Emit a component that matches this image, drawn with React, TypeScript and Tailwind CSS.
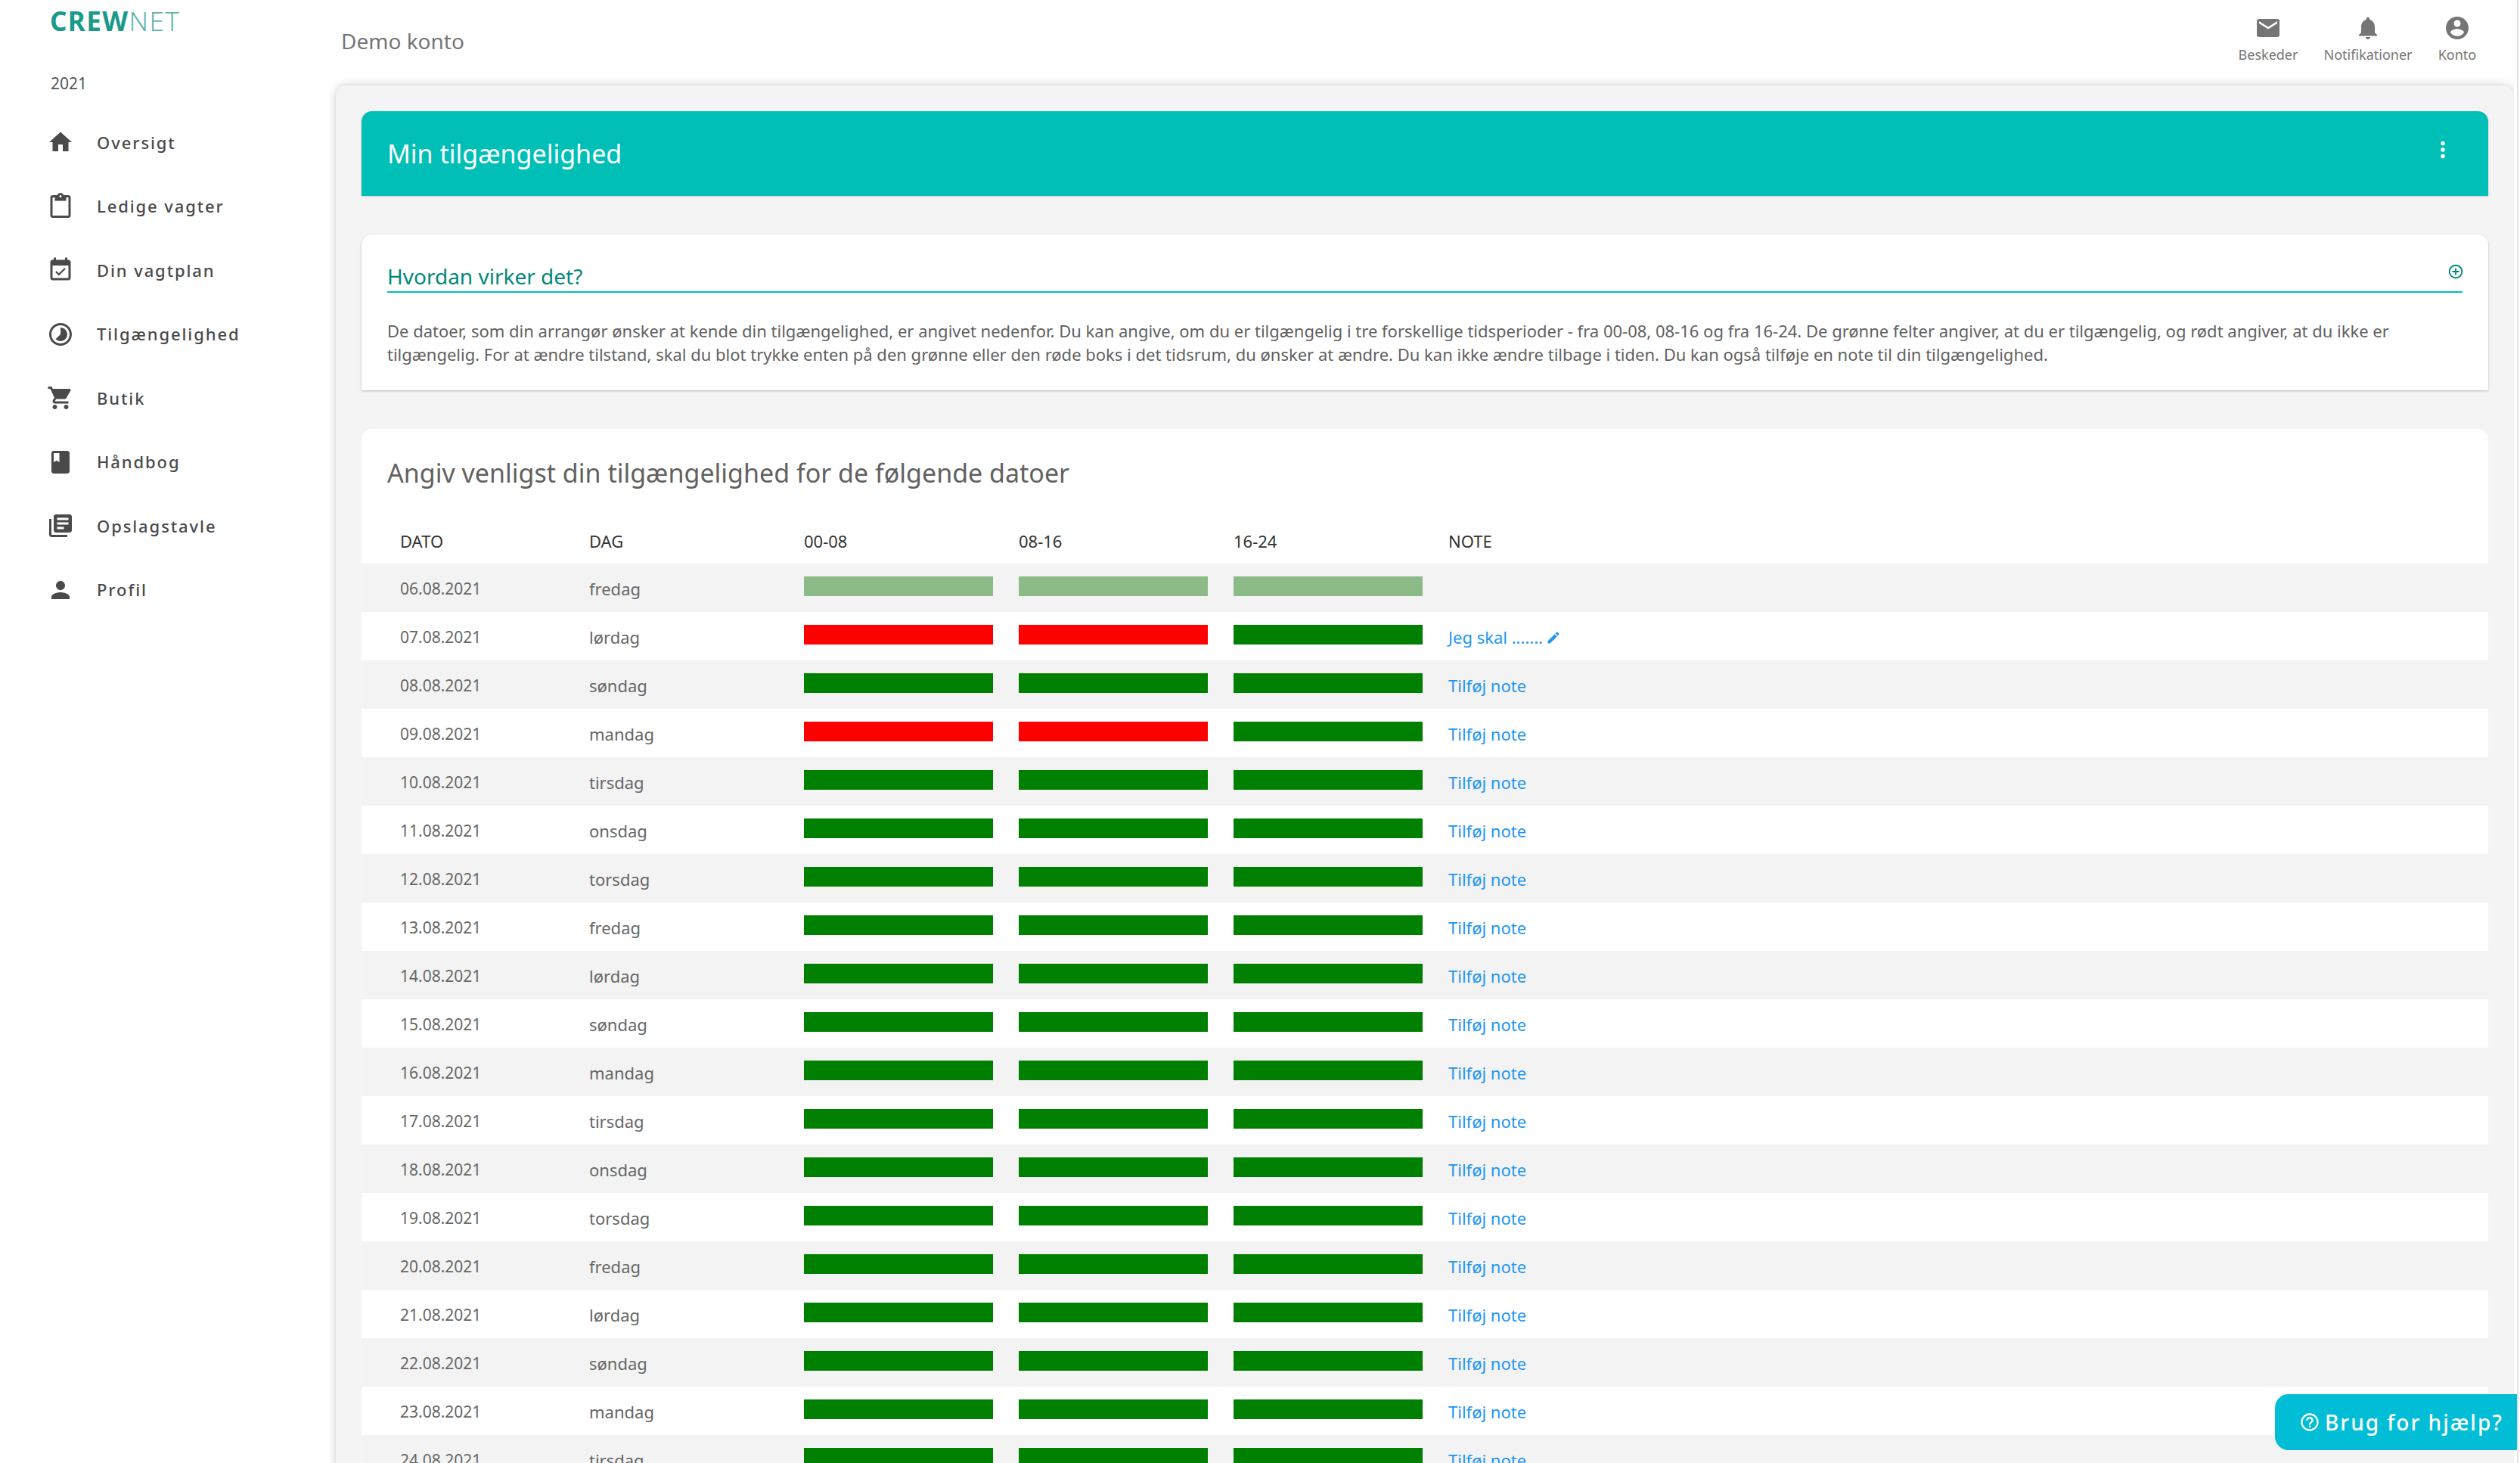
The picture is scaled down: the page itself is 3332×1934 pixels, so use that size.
import React from "react";

const icons: Record<string, string> = {
  home: "M10 20v-6h4v6h5v-8h3L12 3 2 12h3v8z",
  paste: "M19 2h-4.18C14.4.84 13.3 0 12 0c-1.3 0-2.4.84-2.82 2H5c-1.1 0-2 .9-2 2v16c0 1.1.9 2 2 2h14c1.1 0 2-.9 2-2V4c0-1.1-.9-2-2-2zm-7 0c.55 0 1 .45 1 1s-.45 1-1 1-1-.45-1-1 .45-1 1-1zm7 18H5V4h2v3h10V4h2v16z",
  event: "M16.53 11.06L15.47 10l-4.88 4.88-2.12-2.12-1.06 1.06L10.59 17l5.94-5.94zM19 3h-1V1h-2v2H8V1H6v2H5c-1.11 0-1.99.9-1.99 2L3 19c0 1.1.89 2 2 2h14c1.1 0 2-.9 2-2V5c0-1.1-.9-2-2-2zm0 16H5V8h14v11z",
  timelapse: "M16.24 7.76C15.07 6.59 13.54 6 12 6v6l-4.24 4.24c2.34 2.34 6.14 2.34 8.49 0 2.34-2.34 2.34-6.14-.01-8.48zM12 2C6.48 2 2 6.48 2 12s4.48 10 10 10 10-4.48 10-10S17.52 2 12 2zm0 18c-4.42 0-8-3.58-8-8s3.58-8 8-8 8 3.58 8 8-3.58 8-8 8z",
  cart: "M7 18c-1.1 0-1.99.9-1.99 2S5.9 22 7 22s2-.9 2-2-.9-2-2-2zM1 2v2h2l3.6 7.59-1.35 2.45c-.16.28-.25.61-.25.96 0 1.1.9 2 2 2h12v-2H7.42c-.14 0-.25-.11-.25-.25l.03-.12.9-1.63h7.45c.75 0 1.41-.41 1.75-1.03l3.58-6.49c.08-.14.12-.31.12-.48 0-.55-.45-1-1-1H5.21l-.94-2H1zm16 16c-1.1 0-1.99.9-1.99 2s.89 2 1.99 2 2-.9 2-2-.9-2-2-2z",
  book: "M18 2H6c-1.1 0-2 .9-2 2v16c0 1.1.9 2 2 2h12c1.1 0 2-.9 2-2V4c0-1.1-.9-2-2-2zM6 4h5v8l-2.5-1.5L6 12V4z",
  library: "M4 6H2v14c0 1.1.9 2 2 2h14v-2H4V6zm16-4H8c-1.1 0-2 .9-2 2v12c0 1.1.9 2 2 2h12c1.1 0 2-.9 2-2V4c0-1.1-.9-2-2-2zm-1 9H9V9h10v2zm-4 4H9v-2h6v2zm4-8H9V5h10v2z",
  person: "M12 12c2.21 0 4-1.79 4-4s-1.79-4-4-4-4 1.79-4 4 1.79 4 4 4zm0 2c-2.67 0-8 1.34-8 4v2h16v-2c0-2.66-5.33-4-8-4z",
  email: "M20 4H4c-1.1 0-1.99.9-1.99 2L2 18c0 1.1.9 2 2 2h16c1.1 0 2-.9 2-2V6c0-1.1-.9-2-2-2zm0 4l-8 5-8-5V6l8 5 8-5v2z",
  bell: "M12 22c1.1 0 2-.9 2-2h-4c0 1.1.89 2 2 2zm6-6v-5c0-3.07-1.64-5.64-4.5-6.32V4c0-.83-.67-1.5-1.5-1.5s-1.5.67-1.5 1.5v.68C7.63 5.36 6 7.92 6 11v5l-2 2v1h16v-1l-2-2z",
  account: "M12 2C6.48 2 2 6.48 2 12s4.48 10 10 10 10-4.48 10-10S17.52 2 12 2zm0 3c1.66 0 3 1.34 3 3s-1.34 3-3 3-3-1.34-3-3 1.34-3 3-3zm0 14.2c-2.5 0-4.71-1.28-6-3.22.03-1.99 4-3.08 6-3.08 1.99 0 5.97 1.09 6 3.08-1.29 1.94-3.5 3.22-6 3.22z",
  more: "M12 8c1.1 0 2-.9 2-2s-.9-2-2-2-2 .9-2 2 .9 2 2 2zm0 2c-1.1 0-2 .9-2 2s.9 2 2 2 2-.9 2-2-.9-2-2-2zm0 6c-1.1 0-2 .9-2 2s.9 2 2 2 2-.9 2-2-.9-2-2-2z",
  add: "M13 7h-2v4H7v2h4v4h2v-4h4v-2h-4V7zm-1-5C6.48 2 2 6.48 2 12s4.48 10 10 10 10-4.48 10-10S17.52 2 12 2zm0 18c-4.41 0-8-3.59-8-8s3.59-8 8-8 8 3.59 8 8-3.59 8-8 8z",
  edit: "M3 17.25V21h3.75L17.81 9.94l-3.75-3.75L3 17.25zM20.71 7.04c.39-.39.39-1.02 0-1.41l-2.34-2.34c-.39-.39-1.02-.39-1.41 0l-1.83 1.83 3.75 3.75 1.83-1.83z",
  help: "M11 18h2v-2h-2v2zm1-16C6.48 2 2 6.48 2 12s4.48 10 10 10 10-4.48 10-10S17.52 2 12 2zm0 18c-4.41 0-8-3.59-8-8s3.59-8 8-8 8 3.59 8 8-3.59 8-8 8zm0-14c-2.21 0-4 1.79-4 4h2c0-1.1.9-2 2-2s2 .9 2 2c0 2-3 1.75-3 5h2c0-2.25 3-2.5 3-5 0-2.21-1.79-4-4-4z",
};

function Icon({ name, className }: { name: string; className: string }) {
  return (
    <svg viewBox="0 0 24 24" fill="currentColor" className={className}>
      <path d={icons[name]} />
    </svg>
  );
}

const navItems = [
  { icon: "home", label: "Oversigt" },
  { icon: "paste", label: "Ledige vagter" },
  { icon: "event", label: "Din vagtplan" },
  { icon: "timelapse", label: "Tilgængelighed" },
  { icon: "cart", label: "Butik" },
  { icon: "book", label: "Håndbog" },
  { icon: "library", label: "Opslagstavle" },
  { icon: "person", label: "Profil" },
];

const headerItems = [
  { icon: "email", label: "Beskeder", box: "w-[132px]" },
  { icon: "bell", label: "Notifikationer", box: "w-[132px]" },
  { icon: "account", label: "Konto", box: "w-[104px]" },
];

const weekdays = ["fredag", "lørdag", "søndag", "mandag", "tirsdag", "onsdag", "torsdag"];

// bar colours per day, everything not listed is available
const rows = Array.from({ length: 19 }, (_, i) => {
  const day = 6 + i;
  let bars = ["bg-[#008000]", "bg-[#008000]", "bg-[#008000]"];
  if (day === 6) bars = ["bg-[#8dbb87]", "bg-[#8dbb87]", "bg-[#8dbb87]"];
  if (day === 7 || day === 9) bars = ["bg-[#ff0000]", "bg-[#ff0000]", "bg-[#008000]"];
  return {
    date: `${String(day).padStart(2, "0")}.08.2021`,
    weekday: weekdays[i % 7],
    bars,
    day,
  };
});

const gridCols = "grid grid-cols-[301px_284px_284px_284px_284px_1fr]";

export default function App() {
  return (
    <div className="flex h-screen overflow-hidden bg-white font-['Noto_Sans',sans-serif]">
      <aside className="w-[444px] shrink-0">
        <div className="flex h-[54px] items-center pl-[66px] text-[35px] leading-none tracking-[1.4px] text-[#1a9a8a]">
          <span className="font-bold">CREW</span>
          <span className="font-light text-[#5fb5a9]">NET</span>
        </div>
        <div className="mt-[42px] pl-[67px] text-[21px] leading-[28px] text-[#555]">2021</div>
        <nav className="mt-[22px] flex flex-col">
          {navItems.map((item) => (
            <div key={item.label} className="flex h-[84.5px] items-center pl-[62px] text-[#4a4a4a]">
              <Icon name={item.icon} className="h-[36px] w-[36px]" />
              <span className="ml-[30px] text-[22px] font-medium tracking-[1.9px]">{item.label}</span>
            </div>
          ))}
        </nav>
      </aside>

      <div className="flex min-w-0 flex-1 flex-col">
        <header className="flex h-[113px] shrink-0 justify-between pl-[7px]">
          <div className="pt-[34px] text-[28px] leading-[40px] text-[#757575]">Demo konto</div>
          <div className="flex items-start pr-[23px] pt-[19px] text-[#757575]">
            {headerItems.map((item) => (
              <div key={item.label} className={`flex flex-col items-center ${item.box}`}>
                <Icon name={item.icon} className="h-[36px] w-[36px]" />
                <span className="mt-[4px] text-[18px] leading-[26px]">{item.label}</span>
              </div>
            ))}
          </div>
        </header>

        <main className="flex-1 rounded-t-[14px] bg-[#f4f4f4] px-[34px] pt-[34px] shadow-[0_0_12px_rgba(0,0,0,0.22)]">
          <div className="flex h-[112px] items-center justify-between rounded-t-[14px] bg-[#00bfb7] pl-[34px] pr-[43px] shadow-[0_1px_3px_rgba(0,0,0,0.15)]">
            <h1 className="text-[34px] leading-[48px] text-white">Min tilgængelighed</h1>
            <Icon name="more" className="-mt-[10px] h-[34px] w-[34px] text-white" />
          </div>

          <section className="mt-[51px] h-[206px] rounded-t-[14px] bg-white px-[34px] shadow-[0_1px_3px_rgba(0,0,0,0.25)]">
            <div className="flex h-[77px] items-end justify-between border-b-2 border-[#00bfb7]">
              <h2 className="text-[28px] leading-[40px] text-[#00897b]">Hvordan virker det?</h2>
              <Icon name="add" className="-mr-[2px] mb-[15px] h-[22px] w-[22px] text-[#00897b]" />
            </div>
            <p className="mt-[35px] text-[22px] leading-[31px] text-[#616161]">
              De datoer, som din arrangør ønsker at kende din tilgængelighed, er angivet nedenfor. Du kan angive, om du er tilgængelig i tre forskellige tidsperioder - fra 00-08, 08-16 og fra 16-24. De grønne felter angiver, at du er tilgængelig, og rødt angiver, at du ikke er tilgængelig. For at ændre tilstand, skal du blot trykke enten på den grønne eller den røde boks i det tidsrum, du ønsker at ændre. Du kan ikke ændre tilbage i tiden. Du kan også tilføje en note til din tilgængelighed.
            </p>
          </section>

          <section className="mt-[51px] rounded-t-[14px] bg-white">
            <h2 className="px-[34px] pt-[32px] text-[34px] leading-[52px] text-[#616161]">
              Angiv venligst din tilgængelighed for de følgende datoer
            </h2>
            <div className={`${gridCols} mt-[30px] h-[64px] items-center pt-[4px] text-[22px] text-[#333]`}>
              <div className="pl-[51px]">DATO</div>
              <div>DAG</div>
              <div>00-08</div>
              <div>08-16</div>
              <div>16-24</div>
              <div>NOTE</div>
            </div>
            {rows.map((row, i) => (
              <div
                key={row.date}
                className={`${gridCols} h-[64px] items-center pt-[3px] text-[22px] text-[#666] ${i % 2 === 0 ? "bg-[#f3f3f3]" : "bg-white"}`}
              >
                <div className="pl-[51px] text-[21px]">{row.date}</div>
                <div>{row.weekday}</div>
                {row.bars.map((bar, j) => (
                  <div key={j} className="-mt-[7px]">
                    <div className={`h-[26px] w-[250px] ${bar}`} />
                  </div>
                ))}
                <div className="text-[#2196f3]">
                  {row.day === 7 ? (
                    <span className="flex items-center">
                      Jeg skal .......
                      <Icon name="edit" className="ml-[4px] h-[20px] w-[20px]" />
                    </span>
                  ) : row.day !== 6 ? (
                    "Tilføj note"
                  ) : null}
                </div>
              </div>
            ))}
          </section>
        </main>
      </div>

      <div className="w-[8px] shrink-0 bg-white pl-[4px]">
        <div className="h-full w-[2px] bg-[#e4e4e4]" />
      </div>

      <div className="absolute right-[4px] top-[1843px] flex h-[74px] w-[320px] items-center rounded-l-[18px] bg-[#02bdd6] pl-[32px] text-white">
        <Icon name="help" className="h-[28px] w-[28px]" />
        <span className="ml-[6px] text-[28px] font-medium tracking-[2px]">Brug for hjælp?</span>
      </div>
    </div>
  );
}
